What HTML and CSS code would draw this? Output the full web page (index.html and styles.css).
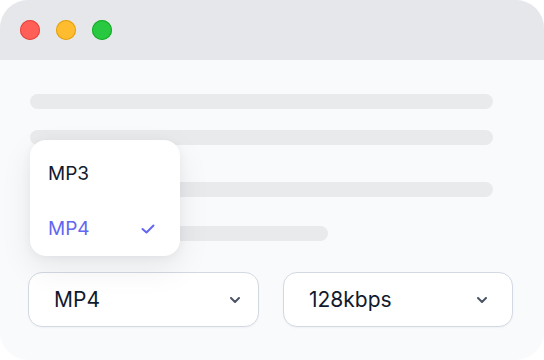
FILE: index.html
```html
<!DOCTYPE html>
<html lang="en">
<head>
<meta charset="utf-8">
<title>Format picker</title>
<link rel="stylesheet" href="styles.css">
</head>
<body>
<div class="window">
  <div class="titlebar">
    <span class="dot dot-red"></span>
    <span class="dot dot-yellow"></span>
    <span class="dot dot-green"></span>
  </div>
  <div class="content">
    <div class="lines">
      <div class="line line-1"></div>
      <div class="line line-2"></div>
      <div class="line line-3"></div>
      <div class="line line-4"></div>
    </div>
    <div class="selects">
      <div class="select select-format">
        <span class="select-value">MP4</span>
        <svg class="chevron" width="10" height="6" viewBox="0 0 10 6"><polyline points="1,1 5,5 9,1" fill="none" stroke="currentColor" stroke-width="2" stroke-linecap="round" stroke-linejoin="round"/></svg>
      </div>
      <div class="select select-bitrate">
        <span class="select-value">128kbps</span>
        <svg class="chevron" width="10" height="6" viewBox="0 0 10 6"><polyline points="1,1 5,5 9,1" fill="none" stroke="currentColor" stroke-width="2" stroke-linecap="round" stroke-linejoin="round"/></svg>
      </div>
    </div>
    <div class="menu">
      <div class="menu-item">MP3</div>
      <div class="menu-item menu-item-active">
        <span>MP4</span>
        <svg class="check" width="14" height="10" viewBox="0 0 14 10"><polyline points="1.5,5 5.5,8.5 12.5,1.5" fill="none" stroke="currentColor" stroke-width="2" stroke-linecap="round" stroke-linejoin="round"/></svg>
      </div>
    </div>
  </div>
</div>
</body>
</html>
```
FILE: styles.css
```css
* { box-sizing: border-box; }
html, body { margin: 0; padding: 0; background: #ffffff; }
body {
  font-family: Inter, "Noto Sans", "Liberation Sans", sans-serif;
  width: 544px;
  height: 360px;
  overflow: hidden;
}
.window {
  width: 544px;
  height: 360px;
  border-radius: 28px;
  background: #f9fafb;
  overflow: hidden;
  display: flex;
  flex-direction: column;
}
.titlebar {
  height: 60px;
  flex: none;
  background: #e5e7eb;
  display: flex;
  align-items: center;
  gap: 16px;
  padding-left: 20px;
}
.dot {
  width: 20px;
  height: 20px;
  border-radius: 50%;
}
.dot-red { background: #ff5f57; box-shadow: inset 0 0 0 1px #e2463f; }
.dot-yellow { background: #febc2e; box-shadow: inset 0 0 0 1px #e1a116; }
.dot-green { background: #28c840; box-shadow: inset 0 0 0 1px #1aab29; }
.content {
  position: relative;
  flex: 1;
  padding-top: 34px;
}
.lines {
  padding: 0 51px 0 30px;
  display: flex;
  flex-direction: column;
}
.line {
  height: 15px;
  border-radius: 8px;
  background: #e9eaec;
}
.line-2 { margin-top: 21px; }
.line-3 { margin-top: 37px; }
.line-4 { margin-top: 29px; width: 298px; }
.selects {
  margin-top: 31px;
  padding: 0 31px 0 28px;
  display: grid;
  grid-template-columns: 231px 230px;
  gap: 24px;
}
.select {
  height: 55px;
  border: 1px solid #d3d9e2;
  border-radius: 14px;
  background: #ffffff;
  box-shadow: 0 1px 2px rgba(17, 24, 39, 0.04);
  display: flex;
  align-items: center;
  justify-content: space-between;
  padding: 0 18px 0 25px;
  color: #111a2e;
  font-size: 21px;
}
.select-bitrate { padding-right: 25px; }
.chevron { color: #4b5563; }
.menu {
  position: absolute;
  left: 30px;
  top: 80px;
  width: 150px;
  height: 116px;
  background: #ffffff;
  border-radius: 16px;
  box-shadow: 0 12px 32px rgba(17, 24, 39, 0.08), 0 2px 10px rgba(17, 24, 39, 0.05);
  padding-top: 6px;
}
.menu-item {
  height: 55px;
  display: flex;
  align-items: center;
  justify-content: space-between;
  padding: 0 25px 0 18px;
  font-size: 19px;
  color: #111a2e;
}
.menu-item-active { color: #6366f1; }
.check { color: #6366f1; }
```
